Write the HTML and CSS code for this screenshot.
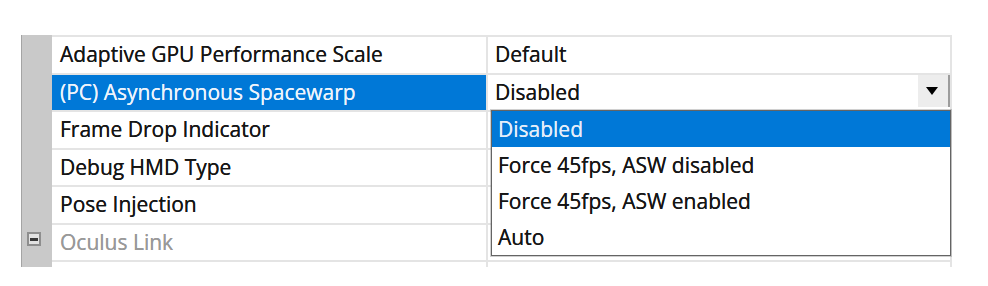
FILE: index.html
```html
<!DOCTYPE html>
<html lang="en">
<head>
    <meta charset="UTF-8">
    <title>Properties</title>
    <link rel="stylesheet" href="styles.css">
</head>
<body>
<div class="grid">
    <div class="row first">
        <div class="gutter"></div>
        <div class="name">Adaptive GPU Performance Scale</div>
        <div class="value">Default</div>
    </div>
    <div class="row">
        <div class="gutter"></div>
        <div class="name selected">(PC) Asynchronous Spacewarp</div>
        <div class="value combo">
            <span class="combo-text">Disabled</span>
            <span class="combo-btn"><span class="arrow"></span></span>
            <ul class="dropdown">
                <li class="current">Disabled</li>
                <li>Force 45fps, ASW disabled</li>
                <li>Force 45fps, ASW enabled</li>
                <li>Auto</li>
            </ul>
        </div>
    </div>
    <div class="row">
        <div class="gutter"></div>
        <div class="name">Frame Drop Indicator</div>
        <div class="value"></div>
    </div>
    <div class="row">
        <div class="gutter"></div>
        <div class="name">Debug HMD Type</div>
        <div class="value"></div>
    </div>
    <div class="row">
        <div class="gutter"></div>
        <div class="name">Pose Injection</div>
        <div class="value"></div>
    </div>
    <div class="row category">
        <div class="gutter"><span class="toggle"></span></div>
        <div class="name">Oculus Link</div>
        <div class="value"></div>
    </div>
    <div class="row tail">
        <div class="gutter"></div>
        <div class="name"></div>
        <div class="value"></div>
    </div>
</div>
</body>
</html>
```
FILE: styles.css
```css
* {
    margin: 0;
    padding: 0;
    box-sizing: border-box;
}

ul {
    list-style: none;
}

body {
    background: #fff;
    font-family: "Open Sans", "Noto Sans", sans-serif;
    font-size: 21px;
    color: #161616;
}

.grid {
    width: 931px;
    margin: 35px 0 0 21px;
}

.row {
    display: grid;
    grid-template-columns: 31px 436px 464px;
    height: 37.5px;
}

.row.first {
    height: 39.5px;
}

.gutter {
    background: #c9c9c9;
    border-left: 1px solid #a4a4a4;
    display: flex;
    align-items: flex-start;
    padding-left: 5px;
}

.name,
.value {
    border-bottom: 2px solid #e4e4e4;
    border-right: 2px solid #e4e4e4;
    line-height: 35.5px;
    white-space: nowrap;
    text-shadow: 0 0 0.6px currentColor;
}

.name {
    padding-left: 8px;
}

.value {
    padding-left: 7px;
}

.row.first .name,
.row.first .value {
    border-top: 2px solid #e4e4e4;
}

.name.selected {
    background: #0078d7;
    color: #eef4fc;
}

.row.category .name {
    color: #999;
}

.row.tail {
    height: 4.5px;
}

.row.tail .name,
.row.tail .value {
    border-bottom: 0;
}

.toggle {
    display: flex;
    align-items: center;
    justify-content: center;
    width: 14px;
    height: 14px;
    margin-top: 7.5px;
    border: 2px solid #8e8e8e;
    background: #e2e2e2;
}

.toggle::before {
    content: "";
    width: 8px;
    height: 3px;
    background: #383838;
}

/* combo box in the selected row */
.value.combo {
    position: relative;
    display: flex;
    align-items: flex-start;
}

.combo-text {
    flex: 1;
}

.combo-btn {
    display: flex;
    align-items: center;
    justify-content: center;
    width: 32px;
    height: 32px;
    background: #ededed;
    border-right: 2px solid #9c9c9c;
}

.arrow {
    width: 0;
    height: 0;
    border-left: 6px solid transparent;
    border-right: 6px solid transparent;
    border-top: 8px solid #000;
    margin: 1px 3px 0 0;
}

.dropdown {
    position: absolute;
    left: 3px;
    top: 35px;
    width: 460px;
    height: 146px;
    background: #fff;
    border: 1px solid #646464;
    box-shadow: 0 0 0 1px rgba(100, 100, 100, 0.3);
    color: #161616;
}

.dropdown li {
    height: 36px;
    line-height: 36px;
    padding-left: 6px;
}

.dropdown li.current {
    background: #0078d7;
    color: #e4eefa;
}
```
